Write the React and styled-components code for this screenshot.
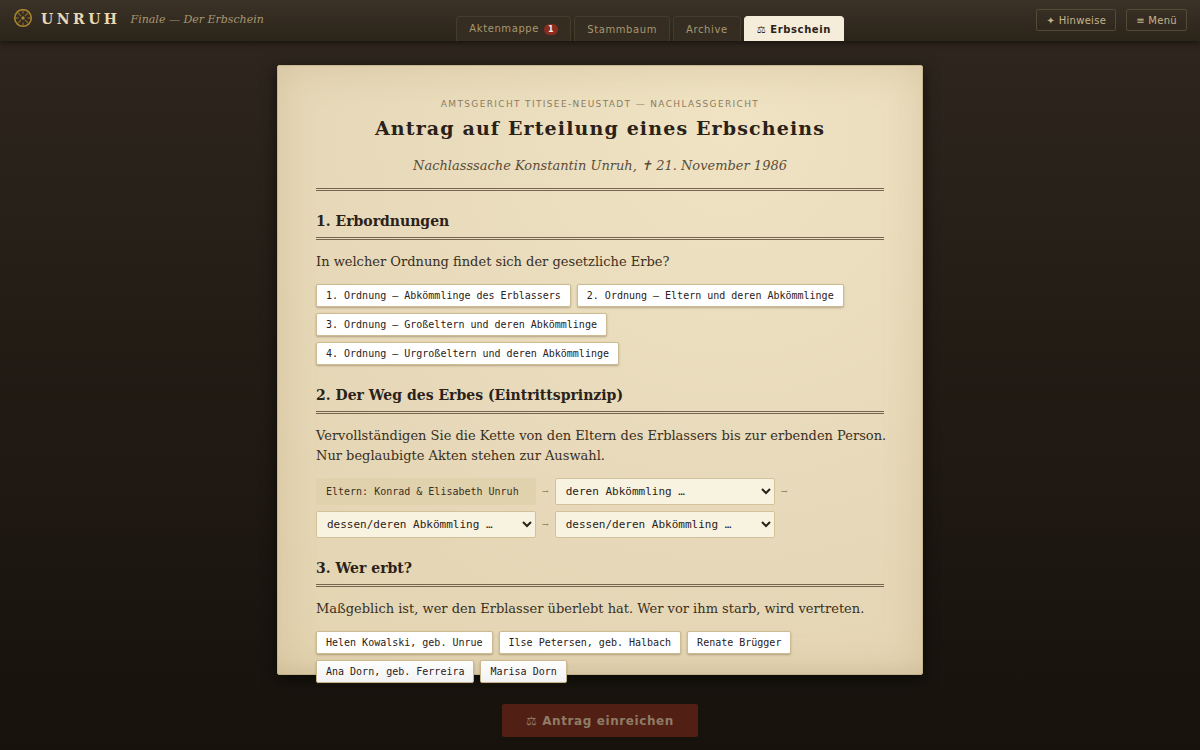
import React, { useState } from "react";
import styled, { createGlobalStyle } from "styled-components";

const sans = `"DejaVu Sans", sans-serif`;
const serif = `"DejaVu Serif", serif`;
const mono = `"DejaVu Sans Mono", monospace`;

const GlobalStyle = createGlobalStyle`
  * {
    box-sizing: border-box;
  }
  body {
    margin: 0;
    background: #17120c;
  }
  h1, h2, p {
    margin: 0;
  }
`;

const Page = styled.div`
  height: 100vh;
  display: flex;
  flex-direction: column;
  overflow: hidden;
  color: #2a2118;
  font-family: ${serif};
  background: linear-gradient(#30271f, #221c15 45%, #17120c);
`;

const TopBar = styled.header`
  z-index: 1;
  height: 41px;
  flex: none;
  padding: 0 13px;
  display: flex;
  justify-content: space-between;
  background: linear-gradient(#3b3228, #2b2419);
  box-shadow: 0 2px 6px rgba(0, 0, 0, 0.5);
`;

const Brand = styled.div`
  height: 38px;
  display: flex;
  align-items: center;
`;

const BrandName = styled.span`
  margin-left: 8px;
  color: #e8d9b4;
  font-size: 14px;
  font-weight: bold;
  letter-spacing: 0.25em;
`;

const Chapter = styled.span`
  margin-left: 10px;
  color: #a8976f;
  font-size: 11px;
  font-style: italic;
`;

const Tabs = styled.nav`
  display: flex;
  align-items: flex-end;
  gap: 3px;
`;

const Tab = styled.button`
  height: 25px;
  padding: 0 12px;
  border: 1px solid ${props => (props.$active ? "#f5ecd7" : "#463c2d")};
  border-bottom: 0;
  border-radius: 4px 4px 0 0;
  background: ${props => (props.$active ? "#f5ecd9" : "#352d21")};
  color: ${props => (props.$active ? "#2a2118" : "#a8976f")};
  font-family: ${sans};
  font-size: 10px;
  font-weight: ${props => (props.$active ? "bold" : "normal")};
  letter-spacing: 0.06em;
`;

const Badge = styled.span`
  display: inline-block;
  margin-left: 5px;
  padding: 0 4px;
  border-radius: 6px;
  background: #8b2a1e;
  color: #f5ecd9;
  font-size: 8px;
  font-weight: bold;
  line-height: 11px;
`;

const Actions = styled.div`
  height: 40px;
  display: flex;
  align-items: center;
  gap: 10px;
`;

const ActionButton = styled.button`
  height: 22px;
  padding: 0 9px;
  border: 1px solid #554a36;
  border-radius: 2px;
  background: transparent;
  color: #c5b58a;
  font-family: ${sans};
  font-size: 10px;
  letter-spacing: 0.03em;
`;

const Desk = styled.main`
  flex: 1;
  min-height: 0;
  padding-top: 24px;
  display: flex;
  flex-direction: column;
  align-items: center;
`;

const Paper = styled.form`
  flex: 1;
  min-height: 0;
  width: 100%;
  max-width: 646px;
  padding: 31px 38px;
  border: 1px solid #c8b78e;
  border-radius: 2px;
  background: radial-gradient(circle at 70% 10%, #efe3c3, #e6d8b8 60%, #e3d4b1);
  box-shadow: 0 4px 16px rgba(0, 0, 0, 0.6), inset 0 0 40px rgba(150, 115, 60, 0.2);
`;

const Head = styled.div`
  padding-bottom: 12px;
  border-bottom: 3px double #75654f;
  text-align: center;
`;

const Court = styled.p`
  color: #8c7c60;
  font-family: ${sans};
  font-size: 9px;
  line-height: 14px;
  letter-spacing: 0.15em;
  text-transform: uppercase;
`;

const Title = styled.h1`
  margin: 3px 0 14px;
  font-size: 19px;
  line-height: 28px;
  letter-spacing: 0.06em;
`;

const Matter = styled.p`
  color: #5c4d3a;
  font-size: 13px;
  font-style: italic;
  line-height: 20px;
`;

const Section = styled.section`
  margin-top: 18px;
`;

const SectionTitle = styled.h2`
  padding-bottom: 4px;
  border-bottom: 3px double #75654f;
  font-size: 14px;
  line-height: 24px;
`;

const Question = styled.p`
  margin: 12px -12px 12px 0;
  color: #3a2f22;
  font-size: 13px;
  line-height: 20px;
`;

const Chips = styled.div`
  display: flex;
  flex-wrap: wrap;
  gap: 6px;
`;

const Chip = styled.button`
  padding: 4px 9px;
  border: 1px solid #cdbb92;
  border-radius: 2px;
  background: ${props => (props.$picked ? "#f0dfae" : "#fff")};
  box-shadow: 0 1px 2px rgba(60, 40, 10, 0.3);
  color: #2a2118;
  font-family: ${mono};
  font-size: 10px;
  line-height: 13px;
`;

const Chain = styled.div`
  display: flex;
  flex-wrap: wrap;
  align-items: center;
  gap: 6px;
`;

const ChainStart = styled.span`
  min-width: 220px;
  padding: 0 10px;
  border-radius: 2px;
  background: #e1d2ae;
  color: #3a2f22;
  font-family: ${mono};
  font-size: 10px;
  line-height: 27px;
`;

const Arrow = styled.span`
  color: #8c7c60;
  font-size: 8px;
`;

const Select = styled.select`
  width: 220px;
  height: 27px;
  padding: 0 6px;
  border: 1px solid #d3c299;
  border-radius: 2px;
  background: #f8f2e0;
  color: #2a2118;
  font-family: ${mono};
  font-size: 11px;
`;

const SubmitBar = styled.div`
  z-index: 1;
  width: 100%;
  flex: none;
  margin-top: -16px;
  padding: 45px 0 13px;
  display: flex;
  justify-content: center;
  background: linear-gradient(rgba(23, 18, 12, 0), rgba(23, 18, 12, 0.06) 26px, rgba(23, 18, 12, 0.9));
`;

const SubmitButton = styled.button`
  height: 33px;
  padding: 0 24px;
  border: 0;
  border-radius: 2px;
  background: #521f15;
  color: #8f7c66;
  font-family: ${sans};
  font-size: 12px;
  font-weight: bold;
  letter-spacing: 0.05em;
`;

const Wheel = () => (
  <svg width="20" height="20" viewBox="0 0 20 20" fill="none" stroke="#a8832f">
    <circle cx="10" cy="9" r="8.3" strokeWidth="1.6" />
    <circle cx="10" cy="9" r="1.7" fill="#a8832f" stroke="none" />
    <path
      d="M10 1.5v3M10 13.5v3M2.5 9h3M14.5 9h3M5 4l3 3M15 4l-3 3M5 14l3-3M15 14l-3-3"
      strokeWidth="1.3"
      opacity="0.65"
    />
  </svg>
);

const orders = [
  "1. Ordnung – Abkömmlinge des Erblassers",
  "2. Ordnung – Eltern und deren Abkömmlinge",
  "3. Ordnung – Großeltern und deren Abkömmlinge",
  "4. Ordnung – Urgroßeltern und deren Abkömmlinge"
];

const heirs = [
  "Helen Kowalski, geb. Unrue",
  "Ilse Petersen, geb. Halbach",
  "Renate Brügger",
  "Ana Dorn, geb. Ferreira",
  "Marisa Dorn"
];

const links = ["deren Abkömmling …", "dessen/deren Abkömmling …", "dessen/deren Abkömmling …"];

const ChipGroup = ({ items, value, onPick }) => (
  <Chips>
    {items.map(item => (
      <Chip
        key={item}
        type="button"
        aria-pressed={value === item}
        $picked={value === item}
        onClick={() => onPick(item)}
      >
        {item}
      </Chip>
    ))}
  </Chips>
);

const App = () => {
  const [order, setOrder] = useState(null);
  const [heir, setHeir] = useState(null);

  return (
    <Page>
      <GlobalStyle />
      <TopBar>
        <Brand>
          <Wheel />
          <BrandName>UNRUH</BrandName>
          <Chapter>Finale — Der Erbschein</Chapter>
        </Brand>
        <Tabs>
          <Tab>
            Aktenmappe<Badge>1</Badge>
          </Tab>
          <Tab>Stammbaum</Tab>
          <Tab>Archive</Tab>
          <Tab $active>⚖ Erbschein</Tab>
        </Tabs>
        <Actions>
          <ActionButton>✦ Hinweise</ActionButton>
          <ActionButton>≡ Menü</ActionButton>
        </Actions>
      </TopBar>
      <Desk>
        <Paper id="antrag">
          <Head>
            <Court>Amtsgericht Titisee-Neustadt — Nachlassgericht</Court>
            <Title>Antrag auf Erteilung eines Erbscheins</Title>
            <Matter>Nachlasssache Konstantin Unruh, ✝ 21. November 1986</Matter>
          </Head>
          <Section>
            <SectionTitle>1. Erbordnungen</SectionTitle>
            <Question>In welcher Ordnung findet sich der gesetzliche Erbe?</Question>
            <ChipGroup items={orders} value={order} onPick={setOrder} />
          </Section>
          <Section>
            <SectionTitle>2. Der Weg des Erbes (Eintrittsprinzip)</SectionTitle>
            <Question id="kette">
              Vervollständigen Sie die Kette von den Eltern des Erblassers bis zur erbenden
              Person. Nur beglaubigte Akten stehen zur Auswahl.
            </Question>
            <Chain>
              <ChainStart>Eltern: Konrad &amp; Elisabeth Unruh</ChainStart>
              {links.map((label, i) => (
                <React.Fragment key={i}>
                  <Arrow>→</Arrow>
                  <Select aria-labelledby="kette">
                    <option>{label}</option>
                  </Select>
                </React.Fragment>
              ))}
            </Chain>
          </Section>
          <Section>
            <SectionTitle>3. Wer erbt?</SectionTitle>
            <Question>
              Maßgeblich ist, wer den Erblasser überlebt hat. Wer vor ihm starb, wird vertreten.
            </Question>
            <ChipGroup items={heirs} value={heir} onPick={setHeir} />
          </Section>
        </Paper>
        <SubmitBar>
          <SubmitButton form="antrag" disabled>
            ⚖ Antrag einreichen
          </SubmitButton>
        </SubmitBar>
      </Desk>
    </Page>
  );
};

export default App;
